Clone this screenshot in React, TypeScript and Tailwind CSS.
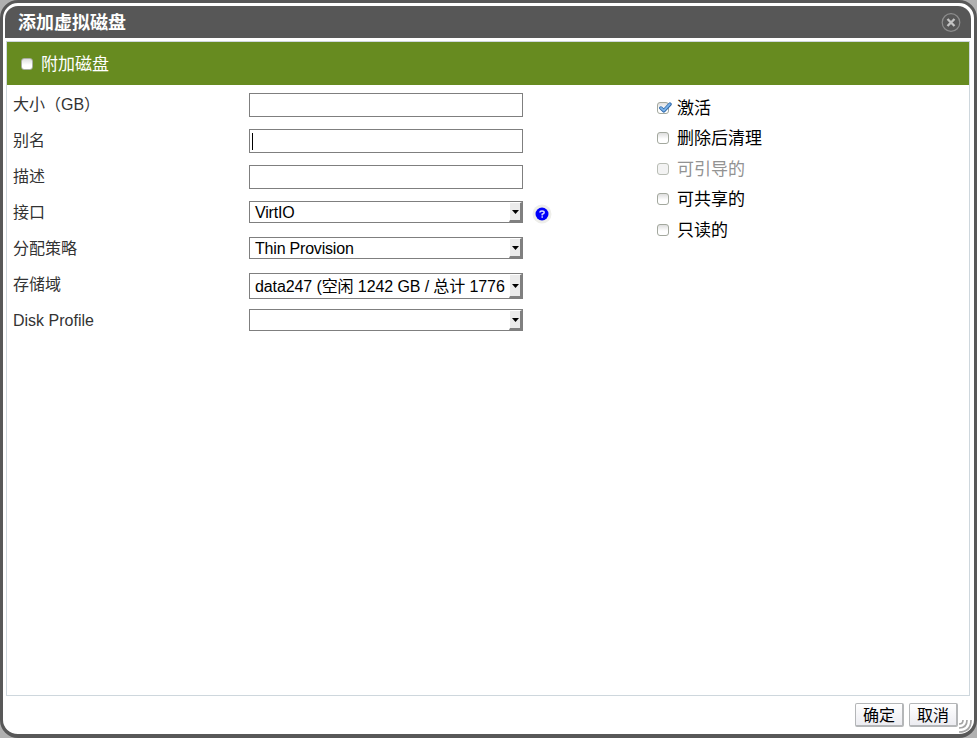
import React from "react";

const FONT = "font-['Liberation_Sans','Noto_Sans_CJK_SC',sans-serif]";

function Box({ checked, disabled }: { checked?: boolean; disabled?: boolean }) {
  return (
    <span
      className={`relative block h-3 w-3 shrink-0 rounded-[3px] border ${
        disabled ? "border-[#b9bdb5] bg-[#f3f3f3]" : "border-[#a3a89e] bg-linear-to-b from-[#dedede] to-white to-60%"
      }`}
    >
      {checked && (
        <svg className="absolute -top-px left-px" width="13" height="12" viewBox="0 0 13 12">
          <path d="M1.9 6 L4.8 8.8 L11 2.2" fill="none" stroke="#2f69ab" strokeWidth="3.5" strokeLinejoin="round" strokeLinecap="round" />
          <path d="M1.9 6 L4.8 8.6 L10.8 2.2" fill="none" stroke="#7db4e8" strokeWidth="1.8" strokeLinejoin="round" strokeLinecap="round" />
        </svg>
      )}
    </span>
  );
}

function TextInput({ caret }: { caret?: boolean }) {
  return (
    <div className="flex h-6 w-[274px] items-center border border-[#7f7f7f] bg-white pl-0.5">
      {caret && <span className="h-[17px] w-px bg-black" />}
    </div>
  );
}

function Select({ value, tall }: { value: string; tall?: boolean }) {
  return (
    <div className={`flex w-[274px] border border-[#7f7f7f] bg-white ${tall ? "h-[26px]" : "h-[22px]"}`}>
      <span
        className={`min-w-0 flex-1 overflow-hidden whitespace-pre pl-[5px] text-base text-black ${
          tall ? "leading-[25px] tracking-[-0.1px]" : "leading-[21px] tracking-[-0.2px]"
        }`}
      >
        {value}
      </span>
      <span className="flex w-[13px] shrink-0 items-center justify-center border-r-2 border-b-2 border-l border-t border-t-white border-l-white border-r-[#808080] border-b-[#808080] bg-[#ebebeb]">
        <svg width="7" height="4" viewBox="0 0 7 4">
          <path d="M0 0H7L3.5 4Z" fill="#000" />
        </svg>
      </span>
    </div>
  );
}

function Row({ label, children }: { label: string; children: React.ReactNode }) {
  return (
    <div className="flex h-9 items-start">
      <span className="w-[236px] text-base leading-[23px] text-[#333]">{label}</span>
      {children}
    </div>
  );
}

function Option({ label, checked, disabled }: { label: string; checked?: boolean; disabled?: boolean }) {
  return (
    <div className="flex h-[30.5px] items-center gap-2">
      <Box checked={checked} disabled={disabled} />
      <span className={`pt-0.5 text-[17px] leading-6 ${disabled ? "text-[#929292]" : "text-black"}`}>{label}</span>
    </div>
  );
}

function Button({ children }: { children: React.ReactNode }) {
  return (
    <button className="h-6 w-[49px] rounded-[2px] border border-r-2 border-b-2 border-[#b4b6b8] bg-linear-to-b from-white to-[#ececf1] pt-px text-base leading-[22px] text-black">
      {children}
    </button>
  );
}

export default function App() {
  return (
    <div className={`h-[738px] w-[977px] overflow-hidden bg-[#b0b0b0] ${FONT}`}>
      <div className="relative flex h-full flex-col rounded-[18px] border-[3px] border-b-4 border-[#585858] bg-white pt-[3px] pr-[3px] pl-0.5">
        <header className="flex h-8 shrink-0 items-center justify-between rounded-t-[13px] bg-[#575757] pr-[10px] pl-[13px]">
          <h1 className="pt-px text-[18px] leading-8 font-bold text-white">添加虚拟磁盘</h1>
          <svg width="20" height="20" viewBox="0 0 20 20">
            <circle cx="10" cy="10.5" r="8.8" fill="none" stroke="#8d8d8d" strokeWidth="1.2" />
            <path d="M6.5 7 L13.5 14 M13.5 7 L6.5 14" stroke="#c4c4c4" strokeWidth="2.3" />
          </svg>
        </header>
        <main className="mt-[3px] mr-px ml-px flex h-[655px] shrink-0 flex-col border border-[#ced7dd] bg-white">
          <div className="flex h-[43px] shrink-0 items-center bg-[#678b20] pl-3.5">
            <span className="mr-2 h-3 w-3 rounded-[3px] border border-[#a9aea1] bg-linear-to-b from-[#dedede] to-white to-60%" />
            <span className="pt-0.5 text-[17px] leading-6 text-white">附加磁盘</span>
          </div>
          <div className="flex pl-1.5">
            <div className="w-[644px] pt-2">
              <Row label="大小（GB）"><TextInput /></Row>
              <Row label="别名"><TextInput caret /></Row>
              <Row label="描述"><TextInput /></Row>
              <Row label="接口">
                <Select value="VirtIO" />
                <svg className="mt-[3px] ml-[9px]" width="20" height="20" viewBox="0 0 20 20">
                  <circle cx="10" cy="10" r="9.5" fill="#eeeeea" />
                  <circle cx="10" cy="10" r="6.5" fill="#0000fa" />
                  <path d="M7.9 8.6 Q7.9 6.9 10 6.9 Q12.2 6.9 12.2 8.5 Q12.2 9.5 10.2 10.3 V11.4 M10.2 12.3 V13.7" fill="none" stroke="#dcdcff" strokeWidth="1.5" />
                </svg>
              </Row>
              <Row label="分配策略"><Select value="Thin Provision" /></Row>
              <Row label="存储域"><Select value="data247 (空闲 1242 GB / 总计 1776" tall /></Row>
              <Row label="Disk Profile"><Select value="" /></Row>
            </div>
            <div className="pt-[7.5px]">
              <Option label="激活" checked />
              <Option label="删除后清理" />
              <Option label="可引导的" disabled />
              <Option label="可共享的" />
              <Option label="只读的" />
            </div>
          </div>
        </main>
        <footer className="flex justify-end gap-[5px] pt-[7px] pr-[13px]">
          <Button>确定</Button>
          <Button>取消</Button>
        </footer>
        <svg className="absolute right-0.5 bottom-0" width="14" height="15" viewBox="0 0 14 15">
          <g fill="none" stroke="#a4a4a4" strokeWidth="1.7">
            <path d="M1 5 Q5 5 5 1" />
            <path d="M1 9 Q9 9 9 1" />
            <path d="M1 13 Q13 13 13 1" />
          </g>
        </svg>
      </div>
    </div>
  );
}
